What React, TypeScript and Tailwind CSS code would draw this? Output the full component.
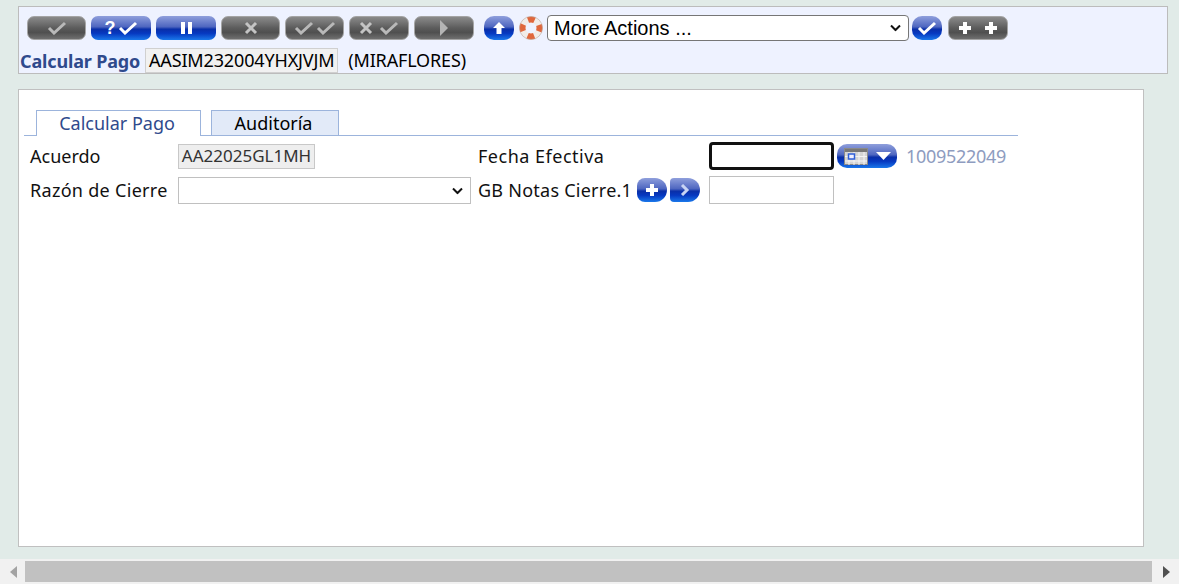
import React from "react";

const GRAY = "bg-[linear-gradient(#8a8a8a_0%,#6f6f6f_30%,#5c5c5c_50%,#4f4f4f_70%,#6f6f6f_100%)] border border-[#a4a4a4]";
const BLUE = "bg-[linear-gradient(#8f9fdc_0%,#4e66c0_45%,#0a2fa8_55%,#0638c0_72%,#1a78ea_100%)]";

function Check({ c = "#b9b9b9" }: { c?: string }) {
  return <svg width="20" height="14" viewBox="0 0 20 14"><path d="M2 7l5 5 11-10" fill="none" stroke={c} strokeWidth="3" /></svg>;
}
function Cross({ c = "#c4c4c4" }: { c?: string }) {
  return <svg width="14" height="14" viewBox="0 0 14 14"><path d="M2 2l10 10M12 2L2 12" fill="none" stroke={c} strokeWidth="3" /></svg>;
}
function Plus({ c = "#fff" }: { c?: string }) {
  return <svg width="14" height="14" viewBox="0 0 14 14"><path d="M7 1v12M1 7h12" fill="none" stroke={c} strokeWidth="4" /></svg>;
}
function Chevron() {
  return (
    <svg className="absolute right-[8px] top-1/2 -translate-y-1/2 pointer-events-none" width="11" height="7" viewBox="0 0 11 7">
      <path d="M1 1l4.500 4.500L10 1" fill="none" stroke="#111" strokeWidth="2" />
    </svg>
  );
}

function Pill({ w, blue, children }: { w: string; blue?: boolean; children?: React.ReactNode }) {
  return (
    <div className={`${w} h-[24px] shrink-0 rounded-[7px] flex items-center justify-center gap-[2px] ${blue ? BLUE : GRAY}`}>
      {children}
    </div>
  );
}

export default function App() {
  return (
    <div className="h-[584px] w-[1179px] overflow-hidden flex flex-col bg-[#e1ebe8] text-[18px] text-[#111] font-['Noto_Sans',sans-serif]">
      <div className="flex-1 min-h-0 pl-[18px] pr-[11px] pt-[6px] pb-[12px] flex flex-col gap-[15px]">
        {/* toolbar */}
        <div className="h-[68px] shrink-0 border border-[#bcbcbc] bg-[#eef2ff] pt-[8px]">
          <div className="flex items-center h-[26px] pl-[8px]">
            <div className="flex gap-[5px]">
              <Pill w="w-[59px]"><Check /></Pill>
              <Pill w="w-[60px]" blue>
                <span className="text-white font-bold text-[18px] leading-none font-['Liberation_Sans',sans-serif]">?</span>
                <Check c="#fff" />
              </Pill>
              <Pill w="w-[60px]" blue>
                <div className="flex gap-[3px]"><div className="w-[4px] h-[12px] bg-white" /><div className="w-[4px] h-[12px] bg-white" /></div>
              </Pill>
              <Pill w="w-[59px]"><Cross /></Pill>
              <Pill w="w-[59px]"><Check /><Check /></Pill>
              <Pill w="w-[60px]"><Cross /><span className="w-[2px]" /><Check /></Pill>
              <Pill w="w-[60px]">
                <svg width="12" height="16" viewBox="0 0 12 16"><path d="M2 0l8 8-8 8z" fill="#b4b4b4" /></svg>
              </Pill>
            </div>
            <div className={`ml-[10px] w-[30px] h-[24px] rounded-[10px] flex items-center justify-center ${BLUE}`}>
              <svg width="14" height="14" viewBox="0 0 14 14"><path d="M7 1l6 6H9.500v6h-5V7H1z" fill="#fff" /></svg>
            </div>
            <svg className="ml-[5px]" width="24" height="24" viewBox="0 0 24 24">
              <circle cx="12" cy="12" r="8.500" fill="none" stroke="#f1ece8" strokeWidth="6" />
              <circle cx="12" cy="12" r="8.500" fill="none" stroke="#e0673c" strokeWidth="6" strokeDasharray="6.700 6.650" strokeDashoffset="3.300" />
              <circle cx="12" cy="12" r="11.500" fill="none" stroke="#b9a79d" strokeWidth="0.600" />
            </svg>
            <div className="relative ml-[4px]">
              <select className="block appearance-none w-[362px] h-[26px] bg-white border border-[#767676] rounded-[4px] pl-[6px] text-[20px] leading-none text-black font-['Liberation_Sans',sans-serif]">
                <option>More Actions ...</option>
              </select>
              <Chevron />
            </div>
            <div className={`ml-[3px] w-[30px] h-[24px] rounded-[10px] flex items-center justify-center ${BLUE}`}><Check c="#fff" /></div>
            <div className="ml-[6px]"><Pill w="w-[60px]"><Plus /><span className="w-[8px]" /><Plus /></Pill></div>
          </div>
          <div className="flex items-center h-[25px] mt-[7px] pl-[1px]">
            <span className="font-bold text-[#2f4a8c] leading-none tracking-[-0.15px]">Calcular Pago</span>
            <span className="ml-[5px] h-[25px] w-[193px] flex items-center justify-center bg-[#f1f1f1] border border-[#d0d0d0] text-black tracking-[-0.15px]">AASIM232004YHXJVJM</span>
            <span className="ml-[10px] text-black tracking-[-0.15px]">(MIRAFLORES)</span>
          </div>
        </div>

        {/* panel */}
        <div className="flex-1 mr-[24px] border border-[#c0c0c0] bg-white pl-[5px] pt-[20px]">
          <div className="w-[994px] h-[26px] border-b border-[#9cb4dc] flex pl-[12px]">
            <div className="w-[165px] h-[26px] border border-b-0 border-[#9cb4dc] bg-white text-[#2f4a8c] flex items-center justify-center pr-[3px]">Calcular Pago</div>
            <div className="ml-[10px] w-[128px] h-[26px] border border-[#9cb4dc] bg-[#e2eaf8] text-black flex items-center justify-center pr-[3px]">Auditoría</div>
          </div>
          <div className="grid grid-cols-[148px_300px_231px_1fr] w-[994px] mt-[6px] pl-[6px] gap-y-[6px] items-center">
            <div>Acuerdo</div>
            <div><span className="w-[137px] h-[25px] flex items-center justify-center bg-[#eeeeee] border border-[#c8c8c8] text-[#333] text-[17px]">AA22025GL1MH</span></div>
            <div className="tracking-[0.5px]">Fecha Efectiva</div>
            <div className="flex items-center">
              <div className="w-[125px] h-[28px] border-[3px] border-[#111] rounded-[4px] bg-white" />
              <div className={`ml-[3px] w-[60px] h-[24px] rounded-[10px] flex items-center justify-center gap-[8px] ${BLUE}`}>
                <svg width="24" height="17" viewBox="0 0 24 17">
                  <rect x="0.500" y="0.500" width="23" height="16" fill="#d4d4d4" stroke="#8a8a8a" />
                  <rect x="1" y="1" width="22" height="3" fill="#777" />
                  <path d="M5 4v13M10 4v13M15 4v13M20 4v13M1 8.500h22M1 13h22" stroke="#f4f4f4" />
                  <rect x="4.500" y="6" width="6" height="5" fill="#f0f0ff" stroke="#2f5fd8" strokeWidth="1.500" />
                </svg>
                <svg width="15" height="8" viewBox="0 0 15 8"><path d="M0 0h15L7.500 8z" fill="#fff" /></svg>
              </div>
              <span className="ml-[9px] text-[#8e9cc0] tracking-[-0.3px]">1009522049</span>
            </div>

            <div className="tracking-[0.3px]">Razón de Cierre</div>
            <div className="relative self-end w-[293px]">
              <select className="block appearance-none w-[293px] h-[27px] bg-white border border-[#c0c0c0] text-black"><option></option></select>
              <Chevron />
            </div>
            <div className="flex items-center">
              <span className="w-[159px] whitespace-nowrap tracking-[0.25px]">GB Notas Cierre.1</span>
              <div className={`w-[30px] h-[24px] rounded-l-[8px] rounded-r-[12px] flex items-center justify-center ${BLUE}`}><Plus /></div>
              <div className={`ml-[3px] w-[30px] h-[24px] rounded-l-[4px] rounded-r-[12px] flex items-center justify-center ${BLUE}`}>
                <svg width="10" height="12" viewBox="0 0 10 12"><path d="M2 1l5 5-5 5" fill="none" stroke="#c8d4f4" strokeWidth="3" /></svg>
              </div>
            </div>
            <div className="w-[125px] h-[28px] border border-[#c0c0c0] bg-white" />
          </div>
        </div>
      </div>

      {/* horizontal scrollbar */}
      <div className="h-[25px] shrink-0 bg-[#f1f1f1] flex items-center">
        <div className="w-[25px] flex justify-center pl-[1px]">
          <svg width="7" height="12" viewBox="0 0 7 12"><path d="M7 0v12L0 6z" fill="#a3a3a3" /></svg>
        </div>
        <div className="w-[1127px] h-[21px] bg-[#c1c1c1]" />
        <div className="flex-1 flex justify-center pl-[1px]">
          <svg width="7" height="12" viewBox="0 0 7 12"><path d="M0 0v12l7-6z" fill="#505050" /></svg>
        </div>
      </div>
    </div>
  );
}
